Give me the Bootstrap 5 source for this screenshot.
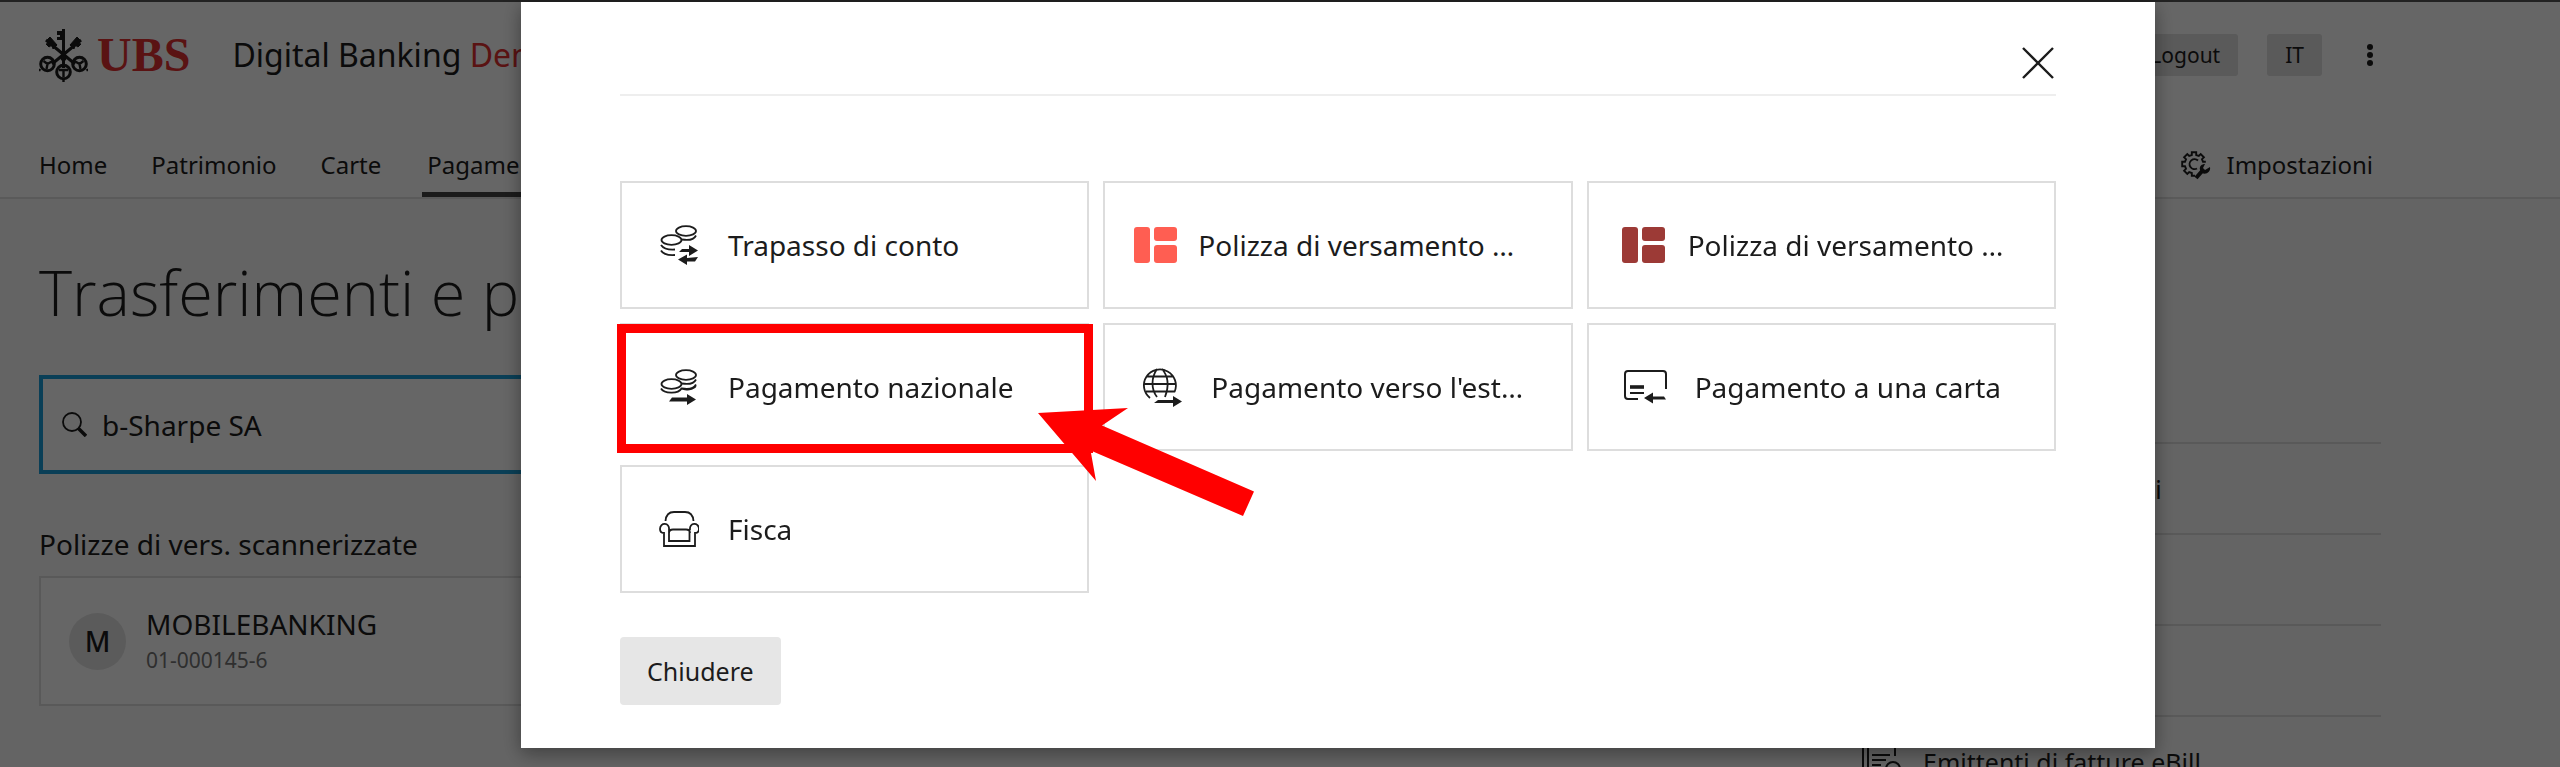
<!DOCTYPE html>
<html lang="it">
<head>
<meta charset="utf-8">
<meta name="viewport" content="width=device-width, initial-scale=1">
<title>UBS Digital Banking Demo</title>
<link href="https://cdn.jsdelivr.net/npm/bootstrap@5.3.0/dist/css/bootstrap.min.css" rel="stylesheet">
<style>
  body { font-family: "Noto Sans", "Open Sans", sans-serif; font-size: 28px; line-height: 40px; color: #1c1c1c; background: #fafafa; border-top: 2px solid #222; overflow: hidden; height: 100vh; }
  a { color: inherit; text-decoration: none; }
  .page-head { background: #fff; border-bottom: 2px solid #e0e0e0; }
  .gutters { padding-left: 39px; padding-right: 179px; }
  .brand-row { height: 106px; }
  .ubs-word { font: 700 48px/56px "Liberation Serif", serif; color: #e03030; margin-left: 9px; }
  .product { font-size: 32px; margin-left: 42px; }
  .red-word { color: #e03030; }
  .chip { background: #e0e0e0; border: 0; border-radius: 3px; height: 42px; padding: 0 18px; font-size: 21px; line-height: 42px; color: inherit; }
  .chip-gap { gap: 29px; }
  .dots { border: 0; background: none; padding: 0 8px 0 16px; color: inherit; }
  .main-nav { height: 89px; gap: 44px; font-size: 24px; line-height: 32px; }
  .main-nav a { padding-bottom: 11px; border-bottom: 5px solid transparent; }
  .main-nav .current { border-color: #444; padding-left: 5px; padding-right: 5px; margin-left: -3px; }
  .page-title { font-family: "Open Sans", sans-serif; font-size: 63px; line-height: 80px; font-weight: 300; margin: 53px 0 43px; }
  .side-col { flex: 0 0 520px; }
  .search-box { height: 99px; border: 4px solid #1a9fd9; background: #fff; padding: 0 19px; margin-bottom: 50px; }
  .search-box input { border: 0; outline: 0; background: none; font-size: 28px; color: inherit; padding: 0 0 0 15px; }
  .group-title { font-size: 28px; line-height: 40px; font-weight: 400; margin: 0 0 12px; }
  .payee { border: 2px solid #dedede; background: #fff; height: 130px; padding: 0 28px; gap: 20px; }
  .avatar { width: 57px; height: 57px; background: #e4e4e4; font-weight: 500; }
  .payee-name { font-size: 28px; line-height: 38px; }
  .payee-no { font-size: 21px; line-height: 34px; color: #757575; }
  .side-list { margin-top: 243px; }
  .side-list a { height: 91px; border-top: 2px solid #dedede; gap: 20px; font-size: 25px; }
  .scrim { position: fixed; inset: 2px 0 0 0; background: rgba(0,0,0,.6); padding-left: 521px; padding-right: 405px; }
  .sheet { background: #fff; padding: 0 99px 43px; box-shadow: 0 5px 18px rgba(0,0,0,.4); }
  .sheet-head { height: 94px; border-bottom: 2px solid #eee; margin-bottom: 85px; padding-top: 30px; }
  .close-x { border: 0; background: none; padding: 0; color: inherit; }
  .tiles { --bs-gutter-x: 14px; --bs-gutter-y: 14px; margin-bottom: 44px; }
  .tile { width: 100%; height: 128px; border: 2px solid #ddd; background: #fff; padding: 0 20px 0 37px; gap: 29px; color: inherit; text-align: left; position: relative; }
  .tile-bill { padding-left: 29px; gap: 21px; }
  .tile-bill-dark { padding-left: 33px; gap: 23px; color: #9c3a36; }
  .tile-bill-dark span { color: #1c1c1c; }
  .tile-card { padding-left: 35px; gap: 27px; }
  .tile svg { flex: none; }
  .marker { position: absolute; inset: -1px -6px -4px -5px; border: 9px solid #f00; }
  .pointer { position: absolute; right: -167px; top: 83px; z-index: 2; }
  .btn-close-sheet { background: #e6e6e6; border: 0; border-radius: 4px; height: 68px; padding: 0 27px; font-size: 25px; color: inherit; }
</style>
</head>
<body>
<header class="page-head">
  <div class="brand-row gutters d-flex align-items-center">
    <a href="#" class="d-flex align-items-center" aria-label="UBS">
      <svg width="49" height="54" viewBox="0 0 49 54" fill="none" stroke="#1c1c1c" stroke-width="3">
        <path d="M24.500 1V40M7 12 36 36M42 12 13 36"/>
        <path d="M18 3h7v9h-7v-3h3v-2h-3z" fill="#1c1c1c" stroke="none"/>
        <path d="M11 9l-3 3 3 3-4 1 3 3 3-2 1 4 4-4zM38 9l3 3-3 3 4 1-3 3-3-2-1 4-4-4z" fill="#1c1c1c" stroke-width="1"/>
        <circle cx="8.500" cy="36" r="6.800"/><circle cx="40.500" cy="36" r="6.800"/><circle cx="24.500" cy="44" r="6.800"/>
        <path d="M8.500 36l-4-3M8.500 36l5-3M8.500 36l-1 5M40.500 36l4-3M40.500 36l-5-3M40.500 36l1 5M20 42h9M24.500 42v7M24.500 50v4M1 41l-1 2M48 41l1 2" stroke-width="2.400"/>
        <circle cx="24.500" cy="30" r="3" fill="#1c1c1c" stroke="none"/>
      </svg>
      <span class="ubs-word">UBS</span>
    </a>
    <span class="product">Digital Banking <span class="red-word">Demo</span></span>
    <div class="ms-auto d-flex align-items-center chip-gap">
      <button type="button" class="chip">Logout</button>
      <button type="button" class="chip">IT</button>
      <button type="button" class="dots" aria-label="Menu"><svg class="d-block" width="6" height="24" viewBox="0 0 6 24" fill="currentColor"><circle cx="3" cy="4" r="3"/><circle cx="3" cy="12" r="3"/><circle cx="3" cy="20" r="3"/></svg></button>
    </div>
  </div>
  <nav class="main-nav gutters d-flex align-items-end">
    <a href="#">Home</a>
    <a href="#">Patrimonio</a>
    <a href="#">Carte</a>
    <a href="#" class="current">Pagamenti</a>
    <a href="#" class="ms-auto d-flex align-items-center gap-3 pe-2">
      <svg width="30" height="30" viewBox="0 0 30 30" fill="none" stroke="currentColor" stroke-width="1.900">
        <path d="M14 25.800H10.800V23L8.200 22 6.300 23.900 3.100 20.700 5 18.800 4 16.200H1.200V11.800H4L5 9.200 3.100 7.300 6.300 4.100 8.200 6 10.800 5.100V2.200H15.200V5.100L17.800 6 19.700 4.100 22.900 7.300 21 9.200 22 11.800H24.800"/>
        <path d="M17 10.500a5 5 0 1 0-1 8"/>
        <path d="M15 28l7-8" stroke-width="4"/>
        <path d="M19 20c-1-4 2-6 5-6l-2 4 2 2 5-3c1 5-4 8-8 6z" fill="currentColor" stroke="none"/>
      </svg>
      Impostazioni
    </a>
  </nav>
</header>

<main class="gutters d-flex">
  <section class="flex-fill">
    <h1 class="page-title">Trasferimenti e pagamenti</h1>
    <div class="search-box d-flex align-items-center">
      <svg width="25" height="25" viewBox="0 0 25 25" fill="none" stroke="#1c1c1c"><circle cx="10" cy="10" r="9" stroke-width="1.800"/><path d="M16 16l8 8" stroke-width="3.500"/></svg>
      <input type="text" class="flex-fill" aria-label="Cerca" value="b-Sharpe SA">
    </div>
    <h2 class="group-title">Polizze di vers. scannerizzate</h2>
    <a href="#" class="payee d-flex align-items-center">
      <span class="avatar rounded-circle d-flex align-items-center justify-content-center">M</span>
      <span class="d-flex flex-column">
        <span class="payee-name">MOBILEBANKING</span>
        <span class="payee-no">01-000145-6</span>
      </span>
    </a>
  </section>
  <aside class="side-col">
    <nav class="side-list">
      <a href="#" class="d-flex align-items-center"><svg width="42" height="40"></svg>Pagamenti pendenti</a>
      <a href="#" class="d-flex align-items-center"></a>
      <a href="#" class="d-flex align-items-center"></a>
      <a href="#" class="d-flex align-items-center">
        <svg width="42" height="40" viewBox="0 0 42 40" fill="none" stroke="#1c1c1c" stroke-width="2">
          <path d="M2 2v36M7 2v36h20M7 2h27v12"/><path d="M11 13h18M11 18h14M11 23h9"/><circle cx="32" cy="27" r="7"/><path d="M22 38c2-6 18-6 20 0"/>
        </svg>
        Emittenti di fatture eBill
      </a>
    </nav>
  </aside>
</main>

<div class="scrim">
  <div class="sheet" role="dialog" aria-modal="true" aria-label="Nuovo pagamento">
    <div class="sheet-head d-flex justify-content-end align-items-center">
      <button type="button" class="close-x" aria-label="Chiudi"><svg class="d-block" width="35" height="34" viewBox="0 0 35 34" fill="none" stroke="currentColor" stroke-width="2.400"><path d="M2 2l30 30M32 2 2 32"/></svg></button>
    </div>
    <div class="row row-cols-3 tiles">
      <div class="col">
        <button type="button" class="tile d-flex align-items-center">
          <svg width="40" height="40" viewBox="0 0 40 40" fill="none" stroke="currentColor" stroke-width="1.800">
            <ellipse cx="27" cy="6" rx="10" ry="4.800"/><ellipse cx="12.500" cy="15" rx="10" ry="4.800"/>
            <path d="M37 10.500c-2 4-8 5-14 4M2 20c2 3 7 5 14 4.500M2 25.500c2 3.500 7 5 14 4.500"/>
            <path d="M23 24h7v-4l9 5.500-9 5.500v-4H20zM39 32l-3 4.500h-8V40l-9-5.500 9-5v3.500z" fill="currentColor" stroke="none"/>
          </svg>
          <span>Trapasso di conto</span>
        </button>
      </div>
      <div class="col">
        <button type="button" class="tile tile-bill d-flex align-items-center">
          <svg width="43" height="36" viewBox="0 0 43 36" fill="#ff5e52"><rect width="16" height="36" rx="3"/><rect x="20" width="23" height="14" rx="3"/><rect x="20" y="18" width="23" height="18" rx="3"/></svg>
          <span>Polizza di versamento …</span>
        </button>
      </div>
      <div class="col">
        <button type="button" class="tile tile-bill-dark d-flex align-items-center">
          <svg width="43" height="36" viewBox="0 0 43 36" fill="currentColor"><rect width="16" height="36" rx="3"/><rect x="20" width="23" height="14" rx="3"/><rect x="20" y="18" width="23" height="18" rx="3"/></svg>
          <span>Polizza di versamento …</span>
        </button>
      </div>
      <div class="col">
        <button type="button" class="tile d-flex align-items-center">
          <svg width="40" height="40" viewBox="0 0 40 40" fill="none" stroke="currentColor" stroke-width="1.800">
            <ellipse cx="27" cy="8" rx="10" ry="4.800"/><ellipse cx="12.500" cy="17" rx="10" ry="4.800"/>
            <path d="M37 12.500c-2 4-8 5-14 4M37 17.500c-2 4-8 5-14 4M2 21.500c3 5 17 6 20.500 0c4 2 12 1 14.500-2.500"/>
            <path d="M13 30.500h15v-3.500l9 5.500-9 5.500v-3.500H10z" fill="currentColor" stroke="none"/>
          </svg>
          <span>Pagamento nazionale</span>
          <span class="marker"></span>
          <svg class="pointer" width="216" height="109" viewBox="0 0 216 109" fill="#f00"><path d="M0 5 90 0 64 17.500 216 83.500 205 108 55 43.500 53 45 58 73z"/></svg>
        </button>
      </div>
      <div class="col">
        <button type="button" class="tile d-flex align-items-center">
          <svg width="40" height="40" viewBox="0 0 40 40" fill="none" stroke="currentColor" stroke-width="1.800">
            <path d="M8 31A16 16 0 1 1 32.500 25M15 2c-6 9-6 20 0 28M20 2c8 9 6 20 3 28M5 9.500h26M2 17h32M4 24.500h29"/>
            <path d="M16 33h15v-4l9 5.500-9 5.500v-4H12z" fill="currentColor" stroke="none"/>
          </svg>
          <span>Pagamento verso l'est…</span>
        </button>
      </div>
      <div class="col">
        <button type="button" class="tile tile-card d-flex align-items-center">
          <svg width="44" height="34" viewBox="0 0 44 34" fill="none" stroke="currentColor" stroke-width="2">
            <path d="M14 29H4q-3 0-3-3V4q0-3 3-3h35q3 0 3 3v15"/><path d="M6 17h14" stroke-width="3.600"/><path d="M6 23h14"/>
            <path d="M20 28l9-5.500v4h11l2 3H29v4z" fill="currentColor" stroke="none"/>
          </svg>
          <span>Pagamento a una carta</span>
        </button>
      </div>
      <div class="col">
        <button type="button" class="tile d-flex align-items-center">
          <svg width="40" height="40" viewBox="0 0 40 40" fill="none" stroke="currentColor" stroke-width="1.800">
            <path d="M6.500 12C7 6 10 3 15 3h11c5 0 8 3 8.500 9"/>
            <path d="M10 21c1-8-9-8-9-1 0 3 2 4 4 4v13h31V24c2 0 4-1 4-4 0-7-10-7-9 1M10 20v12h20.500V20M10 24c0-3 2-3.500 4-3.500h13c2 0 4 .5 4 3.500"/>
          </svg>
          <span>Fisca</span>
        </button>
      </div>
    </div>
    <button type="button" class="btn-close-sheet">Chiudere</button>
  </div>
</div>
<script src="https://cdn.jsdelivr.net/npm/bootstrap@5.3.0/dist/js/bootstrap.bundle.min.js"></script>
</body>
</html>
